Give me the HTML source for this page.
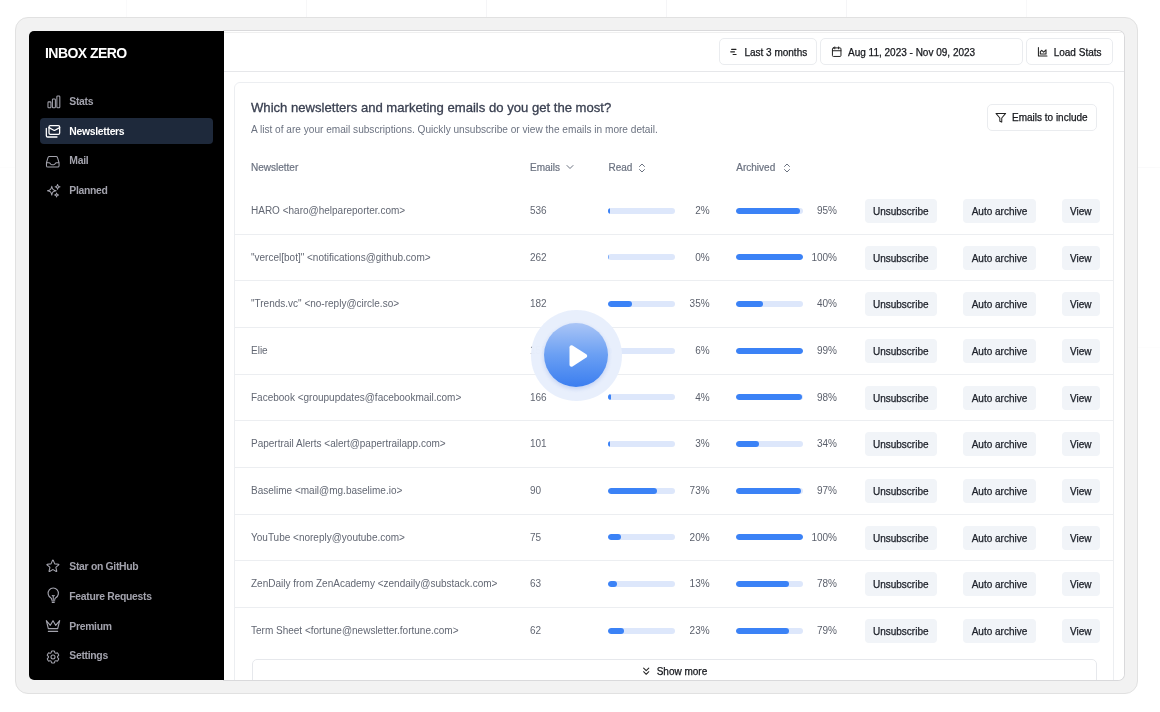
<!DOCTYPE html>
<html><head><meta charset="utf-8">
<style>
*{box-sizing:border-box;margin:0;padding:0}
html,body{width:1160px;height:712px;overflow:hidden;background:#fff;font-family:"Liberation Sans",sans-serif;}
#inner{will-change:transform}
.abs{position:absolute}
.t{position:absolute;white-space:nowrap;line-height:14px;height:14px}
.gv{position:absolute;top:0;width:1px;height:712px;background:#f5f5f7}
.gh{position:absolute;left:0;height:1px;width:1160px;background:#f5f5f7}
#outer{position:absolute;left:15px;top:17px;width:1123px;height:677px;background:#f2f2f2;border:1px solid #e1e1e1;border-radius:13px}
#inner{position:absolute;left:29px;top:31px;width:1095px;height:649px;border-radius:5px 6px 6px 5px;overflow:hidden;background:#fff}
#mborder{position:absolute;left:223px;top:30px;width:902px;height:651px;border:1px solid #d9d9db;border-left:none;border-radius:0 7px 7px 0;background:#fff}
#side{position:absolute;left:0;top:0;width:195px;height:649px;background:#000}
.nav{position:absolute;left:40.3px;height:14px;line-height:14px;font-size:10.4px;font-weight:700;letter-spacing:-0.3px;color:#a3a3ad;white-space:nowrap}
.navi{position:absolute;color:#a3a3ad}
.hbtn{position:absolute;top:38px;height:27px;border:1px solid #eaecef;border-radius:5px;background:#fff}
.btxt{position:absolute;margin-top:0.9px;font-size:10px;color:#16181d;line-height:14px;white-space:nowrap;-webkit-text-stroke:0.25px #16181d}
.row{position:absolute;left:234px;width:880px;height:1px;background:#eceef1}
.cell{position:absolute;font-size:10px;color:#626773;line-height:14px;height:14px;white-space:nowrap}
.bar{position:absolute;height:6px;border-radius:3px;background:#dde7fb;overflow:hidden}
.fill{position:absolute;left:0;top:0;height:100%;border-radius:3px;background:#3b82f6}
.pct{position:absolute;font-size:10px;color:#5a5f6b;line-height:14px;height:14px;text-align:right;white-space:nowrap}
.gbtn{position:absolute;height:24px;border-radius:4px;background:#f1f4f8;font-size:10px;color:#1b1f28;line-height:25.4px;text-align:center;white-space:nowrap;-webkit-text-stroke:0.25px #1b1f28}
.th{position:absolute;top:160.7px;font-size:10px;color:#6b7280;line-height:14px;white-space:nowrap;-webkit-text-stroke:0.2px #6b7280}
</style></head><body>

<div class="abs" style="left:0;top:0;width:1160px;height:712px;-webkit-mask-image:radial-gradient(ellipse 760px 520px at 640px 60px,#000 35%,transparent 100%);mask-image:radial-gradient(ellipse 760px 520px at 640px 60px,#000 35%,transparent 100%)">
<div class="gv" style="left:126px"></div>
<div class="gv" style="left:306px"></div>
<div class="gv" style="left:486px"></div>
<div class="gv" style="left:666px"></div>
<div class="gv" style="left:846px"></div>
<div class="gv" style="left:1026px"></div>
<div class="gh" style="top:167px"></div>
<div class="gh" style="top:347px"></div>
<div class="gh" style="top:527px"></div>
</div>
<div id="outer"></div>
<div id="mborder"></div>
<div id="inner">
<div id="side">
<div class="abs" style="left:16px;top:11.5px;font-size:14px;font-weight:700;color:#fff;letter-spacing:-0.55px;line-height:20px;white-space:nowrap">INBOX ZERO</div>
<div class="abs" style="left:11px;top:87px;width:173px;height:26px;border-radius:4px;background:#1e293b"></div>
<div class="nav" style="top:64.3px;color:#a3a3ad">Stats</div>
<div class="nav" style="top:94.0px;color:#fff">Newsletters</div>
<div class="nav" style="top:123.3px;color:#a3a3ad">Mail</div>
<div class="nav" style="top:152.8px;color:#a3a3ad">Planned</div>
<div class="nav" style="top:529.3px;color:#a3a3ad">Star on GitHub</div>
<div class="nav" style="top:559.2px;color:#a3a3ad">Feature Requests</div>
<div class="nav" style="top:588.8px;color:#a3a3ad">Premium</div>
<div class="nav" style="top:618.4px;color:#a3a3ad">Settings</div>
<svg style="position:absolute;left:16.5px;top:62.5px" width="15.8" height="15.8" viewBox="0 0 24 24" fill="none" stroke="#a3a3ad" stroke-width="1.6" stroke-linecap="round" stroke-linejoin="round" ><path d="M3 13.125C3 12.504 3.504 12 4.125 12h2.25c.621 0 1.125.504 1.125 1.125v6.75C7.5 20.496 6.996 21 6.375 21h-2.25A1.125 1.125 0 013 19.875v-6.75zM9.75 8.625c0-.621.504-1.125 1.125-1.125h2.25c.621 0 1.125.504 1.125 1.125v11.25c0 .621-.504 1.125-1.125 1.125h-2.25a1.125 1.125 0 01-1.125-1.125V8.625zM16.5 4.125c0-.621.504-1.125 1.125-1.125h2.25C20.496 3 21 3.504 21 4.125v15.75c0 .621-.504 1.125-1.125 1.125h-2.25a1.125 1.125 0 01-1.125-1.125V4.125z"/></svg>
<svg style="position:absolute;left:16.2px;top:91.8px" width="16" height="16" viewBox="0 0 24 24" fill="none" stroke="#fff" stroke-width="1.9" stroke-linecap="round" stroke-linejoin="round" ><rect width="16" height="13" x="6" y="4" rx="2"/><path d="m22 7-7.1 3.78c-.57.3-1.23.3-1.8 0L6 7"/><path d="M2 8v11c0 1.1.9 2 2 2h14"/></svg>
<svg style="position:absolute;left:16.2px;top:122.8px" width="15.5" height="15.5" viewBox="0 0 24 24" fill="none" stroke="#a3a3ad" stroke-width="1.6" stroke-linecap="round" stroke-linejoin="round" ><path d="M2.25 13.5h3.86a2.25 2.25 0 012.012 1.244l.256.512a2.25 2.25 0 002.013 1.244h3.218a2.25 2.25 0 002.013-1.244l.256-.512a2.25 2.25 0 012.013-1.244h3.859m-19.5.338V18a2.25 2.25 0 002.25 2.25h15A2.25 2.25 0 0021.75 18v-4.162c0-.224-.034-.447-.1-.661L19.24 5.338a2.25 2.25 0 00-2.15-1.588H6.911a2.25 2.25 0 00-2.15 1.588L2.35 13.177a2.25 2.25 0 00-.1.661z"/></svg>
<svg style="position:absolute;left:16.5px;top:151.5px" width="15.4" height="15.4" viewBox="0 0 24 24" fill="none" stroke="#a3a3ad" stroke-width="1.6" stroke-linecap="round" stroke-linejoin="round" ><path d="M9.813 15.904L9 18.75l-.813-2.846a4.5 4.5 0 00-3.09-3.09L2.25 12l2.846-.813a4.5 4.5 0 003.09-3.09L9 5.25l.813 2.846a4.5 4.5 0 003.09 3.09L15.75 12l-2.846.813a4.5 4.5 0 00-3.09 3.09zM18.259 8.715L18 9.75l-.259-1.035a3.375 3.375 0 00-2.455-2.456L14.25 6l1.036-.259a3.375 3.375 0 002.455-2.456L18 2.25l.259 1.035a3.375 3.375 0 002.456 2.456L21.75 6l-1.035.259a3.375 3.375 0 00-2.456 2.456zM16.894 20.567L16.5 21.75l-.394-1.183a2.25 2.25 0 00-1.423-1.423L13.5 18.75l1.183-.394a2.25 2.25 0 001.423-1.423l.394-1.183.394 1.183a2.25 2.25 0 001.423 1.423l1.183.394-1.183.394a2.25 2.25 0 00-1.423 1.423z"/></svg>
<svg style="position:absolute;left:16.4px;top:527.2px" width="15.8" height="15.8" viewBox="0 0 24 24" fill="none" stroke="#a3a3ad" stroke-width="1.6" stroke-linecap="round" stroke-linejoin="round" ><path d="M11.48 3.499a.562.562 0 011.04 0l2.125 5.111a.563.563 0 00.475.345l5.518.442c.499.04.701.663.321.988l-4.204 3.602a.563.563 0 00-.182.557l1.285 5.385a.562.562 0 01-.84.61l-4.725-2.885a.563.563 0 00-.586 0L6.982 20.54a.562.562 0 01-.84-.61l1.285-5.386a.562.562 0 00-.182-.557l-4.204-3.602a.563.563 0 01.321-.988l5.518-.442a.563.563 0 00.475-.345L11.48 3.5z"/></svg>
<svg style="position:absolute;left:15.8px;top:556.2px" width="16.5" height="16.5" viewBox="0 0 24 24" fill="none" stroke="#a3a3ad" stroke-width="1.6" stroke-linecap="round" stroke-linejoin="round" ><path d="M12 18v-5.25m0 0a6.01 6.01 0 001.5-.189m-1.5.189a6.01 6.01 0 01-1.5-.189m3.75 7.478a12.06 12.06 0 01-4.5 0m3.75 2.383a14.406 14.406 0 01-3 0M14.25 18v-.192c0-.983.658-1.823 1.508-2.316a7.5 7.5 0 10-7.517 0c.85.493 1.509 1.333 1.509 2.316V18"/></svg>
<svg style="position:absolute;left:16.2px;top:586.9px" width="16" height="16" viewBox="0 0 24 24" fill="none" stroke="#a3a3ad" stroke-width="1.7" stroke-linecap="round" stroke-linejoin="round" ><path d="m2 4 3 12h14l3-12-6 7-4-7-4 7-6-7zm3 16h14"/></svg>
<svg style="position:absolute;left:15.9px;top:617.6px" width="16" height="16" viewBox="0 0 24 24" fill="none" stroke="#a3a3ad" stroke-width="1.6" stroke-linecap="round" stroke-linejoin="round" ><path d="M9.594 3.94c.09-.542.56-.94 1.11-.94h2.593c.55 0 1.02.398 1.11.94l.213 1.281c.063.374.313.686.645.87.074.04.147.083.22.127.324.196.72.257 1.075.124l1.217-.456a1.125 1.125 0 011.37.49l1.296 2.247a1.125 1.125 0 01-.26 1.431l-1.003.827c-.293.24-.438.613-.431.992a6.759 6.759 0 010 .255c-.007.378.138.75.43.99l1.005.828c.424.35.534.954.26 1.43l-1.298 2.247a1.125 1.125 0 01-1.369.491l-1.217-.456c-.355-.133-.75-.072-1.076.124a6.57 6.57 0 01-.22.128c-.331.183-.581.495-.644.869l-.213 1.28c-.09.543-.56.941-1.11.941h-2.594c-.55 0-1.02-.398-1.11-.94l-.213-1.281c-.062-.374-.312-.686-.644-.87a6.52 6.52 0 01-.22-.127c-.325-.196-.72-.257-1.076-.124l-1.217.456a1.125 1.125 0 01-1.369-.49l-1.297-2.247a1.125 1.125 0 01.26-1.431l1.004-.827c.292-.24.437-.613.43-.992a6.932 6.932 0 010-.255c.007-.378-.138-.75-.43-.99l-1.004-.828a1.125 1.125 0 01-.26-1.43l1.297-2.247a1.125 1.125 0 011.37-.491l1.216.456c.356.133.751.072 1.076-.124.072-.044.146-.087.22-.128.332-.183.582-.495.644-.869l.214-1.281z"/><path d="M15 12a3 3 0 11-6 0 3 3 0 016 0z"/></svg>
</div>
<div class="abs" style="left:195px;top:1px;width:900px;height:1px;background:#efefef"></div>
<div class="abs" style="left:195px;top:40px;width:910px;height:1px;background:#e6e7ea"></div>
<div class="hbtn" style="left:690.4px;top:7px;width:98.0px"></div><svg style="position:absolute;left:695px;top:9px" width="24" height="24" viewBox="0 0 24 24" fill="none" stroke="#222" stroke-width="1.15" stroke-linecap="round" stroke-linejoin="round" ><path d="M7.6 9.3H12M6.7 11.8H10.5M9.1 14.5H12.1"/></svg><div class="btxt" style="left:715.4px;top:13.8px">Last 3 months</div>
<div class="hbtn" style="left:791.4px;top:7px;width:202.6px"></div><svg style="position:absolute;left:802.2px;top:15.2px" width="11.4" height="11.4" viewBox="0 0 24 24" fill="none" stroke="#222" stroke-width="2.1" stroke-linecap="round" stroke-linejoin="round" ><rect width="18" height="18" x="3" y="4" rx="2" ry="2"/><line x1="16" x2="16" y1="2" y2="6"/><line x1="8" x2="8" y1="2" y2="6"/><line x1="3" x2="21" y1="10" y2="10"/></svg><div class="btxt" style="left:819px;top:13.8px">Aug 11, 2023 - Nov 09, 2023</div>
<div class="hbtn" style="left:997px;top:7px;width:86.6px"></div><svg style="position:absolute;left:1008px;top:14.9px" width="11.4" height="11.4" viewBox="0 0 24 24" fill="none" stroke="#222" stroke-width="2.2" stroke-linecap="round" stroke-linejoin="round" ><path d="M3 3v18h18"/><path d="M7 12v5h12V8l-5 5-4-4Z"/></svg><div class="btxt" style="left:1024.7px;top:13.8px">Load Stats</div>
<div class="abs" style="left:205px;top:51px;width:880px;height:700px;border:1px solid #eceef1;border-radius:6px;background:#fff"></div>
<div class="abs" style="left:222px;top:67.5px;font-size:13.1px;font-weight:400;color:#3a4051;-webkit-text-stroke:0.3px #3a4051;line-height:18px;white-space:nowrap">Which newsletters and marketing emails do you get the most?</div>
<div class="abs" style="left:222px;top:92.3px;font-size:10.1px;color:#6b7280;line-height:14px;white-space:nowrap">A list of are your email subscriptions. Quickly unsubscribe or view the emails in more detail.</div>
<div class="hbtn" style="left:958.2px;top:73.2px;width:109.4px;height:26.5px"></div>
<svg style="position:absolute;left:966.4px;top:80.6px" width="11.6" height="11.6" viewBox="0 0 24 24" fill="none" stroke="#222" stroke-width="2.1" stroke-linecap="round" stroke-linejoin="round" ><polygon points="22 3 2 3 10 12.46 10 19 14 21 14 12.46 22 3"/></svg>
<div class="btxt" style="left:983px;top:79.5px">Emails to include</div>
<div class="th" style="left:222px;top:130.4px">Newsletter</div>
<div class="th" style="left:501px;top:130.4px">Emails</div>
<div class="th" style="left:579.5px;top:130.4px">Read</div>
<div class="th" style="left:707.3px;top:130.4px">Archived</div>
<svg style="position:absolute;left:535.1px;top:130.1px" width="12" height="12" viewBox="0 0 24 24" fill="none" stroke="#6b7280" stroke-width="2" stroke-linecap="round" stroke-linejoin="round" ><path d="m6 9 6 6 6-6"/></svg>
<svg style="position:absolute;left:607px;top:130.7px" width="12" height="12" viewBox="0 0 24 24" fill="none" stroke="#6b7280" stroke-width="2" stroke-linecap="round" stroke-linejoin="round" ><path d="m7 15 5 5 5-5"/><path d="m7 9 5-5 5 5"/></svg>
<svg style="position:absolute;left:752.1px;top:130.7px" width="12" height="12" viewBox="0 0 24 24" fill="none" stroke="#6b7280" stroke-width="2" stroke-linecap="round" stroke-linejoin="round" ><path d="m7 15 5 5 5-5"/><path d="m7 9 5-5 5 5"/></svg>
<div class="cell" style="left:222px;top:173.10px">HARO &lt;haro@helpareporter.com&gt;</div>
<div class="cell" style="left:501px;top:173.10px">536</div>
<div class="bar" style="left:579px;top:176.80px;width:67.4px"><div class="fill" style="width:2.20px"></div></div>
<div class="pct" style="left:641px;top:173.10px;width:39.6px">2%</div>
<div class="bar" style="left:707px;top:176.80px;width:67.4px"><div class="fill" style="width:64.03px"></div></div>
<div class="pct" style="left:768px;top:173.10px;width:40px">95%</div>
<div class="gbtn" style="left:835.5px;top:167.90px;width:72.5px">Unsubscribe</div>
<div class="gbtn" style="left:934px;top:167.90px;width:73px">Auto archive</div>
<div class="gbtn" style="left:1032.7px;top:167.90px;width:38.2px">View</div>
<div class="row" style="left:205.5px;top:202.63px;width:879px"></div>
<div class="cell" style="left:222px;top:219.77px">"vercel[bot]" &lt;notifications@github.com&gt;</div>
<div class="cell" style="left:501px;top:219.77px">262</div>
<div class="bar" style="left:579px;top:223.47px;width:67.4px"><div class="fill" style="width:1px;opacity:.6"></div></div>
<div class="pct" style="left:641px;top:219.77px;width:39.6px">0%</div>
<div class="bar" style="left:707px;top:223.47px;width:67.4px"><div class="fill" style="width:67.40px"></div></div>
<div class="pct" style="left:768px;top:219.77px;width:40px">100%</div>
<div class="gbtn" style="left:835.5px;top:214.57px;width:72.5px">Unsubscribe</div>
<div class="gbtn" style="left:934px;top:214.57px;width:73px">Auto archive</div>
<div class="gbtn" style="left:1032.7px;top:214.57px;width:38.2px">View</div>
<div class="row" style="left:205.5px;top:249.31px;width:879px"></div>
<div class="cell" style="left:222px;top:266.44px">"Trends.vc" &lt;no-reply@circle.so&gt;</div>
<div class="cell" style="left:501px;top:266.44px">182</div>
<div class="bar" style="left:579px;top:270.14px;width:67.4px"><div class="fill" style="width:23.59px"></div></div>
<div class="pct" style="left:641px;top:266.44px;width:39.6px">35%</div>
<div class="bar" style="left:707px;top:270.14px;width:67.4px"><div class="fill" style="width:26.96px"></div></div>
<div class="pct" style="left:768px;top:266.44px;width:40px">40%</div>
<div class="gbtn" style="left:835.5px;top:261.24px;width:72.5px">Unsubscribe</div>
<div class="gbtn" style="left:934px;top:261.24px;width:73px">Auto archive</div>
<div class="gbtn" style="left:1032.7px;top:261.24px;width:38.2px">View</div>
<div class="row" style="left:205.5px;top:295.98px;width:879px"></div>
<div class="cell" style="left:222px;top:313.11px">Elie</div>
<div class="cell" style="left:501px;top:313.11px">152</div>
<div class="bar" style="left:579px;top:316.81px;width:67.4px"><div class="fill" style="width:4.04px"></div></div>
<div class="pct" style="left:641px;top:313.11px;width:39.6px">6%</div>
<div class="bar" style="left:707px;top:316.81px;width:67.4px"><div class="fill" style="width:66.73px"></div></div>
<div class="pct" style="left:768px;top:313.11px;width:40px">99%</div>
<div class="gbtn" style="left:835.5px;top:307.91px;width:72.5px">Unsubscribe</div>
<div class="gbtn" style="left:934px;top:307.91px;width:73px">Auto archive</div>
<div class="gbtn" style="left:1032.7px;top:307.91px;width:38.2px">View</div>
<div class="row" style="left:205.5px;top:342.64px;width:879px"></div>
<div class="cell" style="left:222px;top:359.78px">Facebook &lt;groupupdates@facebookmail.com&gt;</div>
<div class="cell" style="left:501px;top:359.78px">166</div>
<div class="bar" style="left:579px;top:363.48px;width:67.4px"><div class="fill" style="width:2.70px"></div></div>
<div class="pct" style="left:641px;top:359.78px;width:39.6px">4%</div>
<div class="bar" style="left:707px;top:363.48px;width:67.4px"><div class="fill" style="width:66.05px"></div></div>
<div class="pct" style="left:768px;top:359.78px;width:40px">98%</div>
<div class="gbtn" style="left:835.5px;top:354.58px;width:72.5px">Unsubscribe</div>
<div class="gbtn" style="left:934px;top:354.58px;width:73px">Auto archive</div>
<div class="gbtn" style="left:1032.7px;top:354.58px;width:38.2px">View</div>
<div class="row" style="left:205.5px;top:389.32px;width:879px"></div>
<div class="cell" style="left:222px;top:406.45px">Papertrail Alerts &lt;alert@papertrailapp.com&gt;</div>
<div class="cell" style="left:501px;top:406.45px">101</div>
<div class="bar" style="left:579px;top:410.15px;width:67.4px"><div class="fill" style="width:2.20px"></div></div>
<div class="pct" style="left:641px;top:406.45px;width:39.6px">3%</div>
<div class="bar" style="left:707px;top:410.15px;width:67.4px"><div class="fill" style="width:22.92px"></div></div>
<div class="pct" style="left:768px;top:406.45px;width:40px">34%</div>
<div class="gbtn" style="left:835.5px;top:401.25px;width:72.5px">Unsubscribe</div>
<div class="gbtn" style="left:934px;top:401.25px;width:73px">Auto archive</div>
<div class="gbtn" style="left:1032.7px;top:401.25px;width:38.2px">View</div>
<div class="row" style="left:205.5px;top:435.99px;width:879px"></div>
<div class="cell" style="left:222px;top:453.12px">Baselime &lt;mail@mg.baselime.io&gt;</div>
<div class="cell" style="left:501px;top:453.12px">90</div>
<div class="bar" style="left:579px;top:456.82px;width:67.4px"><div class="fill" style="width:49.20px"></div></div>
<div class="pct" style="left:641px;top:453.12px;width:39.6px">73%</div>
<div class="bar" style="left:707px;top:456.82px;width:67.4px"><div class="fill" style="width:65.38px"></div></div>
<div class="pct" style="left:768px;top:453.12px;width:40px">97%</div>
<div class="gbtn" style="left:835.5px;top:447.92px;width:72.5px">Unsubscribe</div>
<div class="gbtn" style="left:934px;top:447.92px;width:73px">Auto archive</div>
<div class="gbtn" style="left:1032.7px;top:447.92px;width:38.2px">View</div>
<div class="row" style="left:205.5px;top:482.65px;width:879px"></div>
<div class="cell" style="left:222px;top:499.79px">YouTube &lt;noreply@youtube.com&gt;</div>
<div class="cell" style="left:501px;top:499.79px">75</div>
<div class="bar" style="left:579px;top:503.49px;width:67.4px"><div class="fill" style="width:13.48px"></div></div>
<div class="pct" style="left:641px;top:499.79px;width:39.6px">20%</div>
<div class="bar" style="left:707px;top:503.49px;width:67.4px"><div class="fill" style="width:67.40px"></div></div>
<div class="pct" style="left:768px;top:499.79px;width:40px">100%</div>
<div class="gbtn" style="left:835.5px;top:494.59px;width:72.5px">Unsubscribe</div>
<div class="gbtn" style="left:934px;top:494.59px;width:73px">Auto archive</div>
<div class="gbtn" style="left:1032.7px;top:494.59px;width:38.2px">View</div>
<div class="row" style="left:205.5px;top:529.33px;width:879px"></div>
<div class="cell" style="left:222px;top:546.46px">ZenDaily from ZenAcademy &lt;zendaily@substack.com&gt;</div>
<div class="cell" style="left:501px;top:546.46px">63</div>
<div class="bar" style="left:579px;top:550.16px;width:67.4px"><div class="fill" style="width:8.76px"></div></div>
<div class="pct" style="left:641px;top:546.46px;width:39.6px">13%</div>
<div class="bar" style="left:707px;top:550.16px;width:67.4px"><div class="fill" style="width:52.57px"></div></div>
<div class="pct" style="left:768px;top:546.46px;width:40px">78%</div>
<div class="gbtn" style="left:835.5px;top:541.26px;width:72.5px">Unsubscribe</div>
<div class="gbtn" style="left:934px;top:541.26px;width:73px">Auto archive</div>
<div class="gbtn" style="left:1032.7px;top:541.26px;width:38.2px">View</div>
<div class="row" style="left:205.5px;top:576.00px;width:879px"></div>
<div class="cell" style="left:222px;top:593.13px">Term Sheet &lt;fortune@newsletter.fortune.com&gt;</div>
<div class="cell" style="left:501px;top:593.13px">62</div>
<div class="bar" style="left:579px;top:596.83px;width:67.4px"><div class="fill" style="width:15.50px"></div></div>
<div class="pct" style="left:641px;top:593.13px;width:39.6px">23%</div>
<div class="bar" style="left:707px;top:596.83px;width:67.4px"><div class="fill" style="width:53.25px"></div></div>
<div class="pct" style="left:768px;top:593.13px;width:40px">79%</div>
<div class="gbtn" style="left:835.5px;top:587.93px;width:72.5px">Unsubscribe</div>
<div class="gbtn" style="left:934px;top:587.93px;width:73px">Auto archive</div>
<div class="gbtn" style="left:1032.7px;top:587.93px;width:38.2px">View</div>
<div class="abs" style="left:222.5px;top:628.2px;width:845.3px;height:60px;border:1px solid #e6e8ec;border-radius:5px;background:#fff"></div>
<svg style="position:absolute;left:610.6px;top:633.6px" width="12.4" height="12.4" viewBox="0 0 24 24" fill="none" stroke="#222" stroke-width="2" stroke-linecap="round" stroke-linejoin="round" ><path d="m7 6 5 5 5-5"/><path d="m7 13 5 5 5-5"/></svg>
<div class="btxt" style="left:627.7px;top:633px">Show more</div>
<div class="abs" style="left:502px;top:279.2px;width:90.6px;height:90.6px;border-radius:50%;background:rgba(232,239,252,0.985)"></div>
<div class="abs" style="left:514.9px;top:292px;width:64.2px;height:64.2px;border-radius:50%;background:linear-gradient(180deg,#aac5f6 0%,#6a9ff3 50%,#3b7ef0 100%);box-shadow:0 2px 4px rgba(30,80,200,0.18)"></div>
<svg class="abs" style="left:537px;top:312.5px" width="24" height="24" viewBox="0 0 24 24"><path d="M3.5 3.2 C3.5 1.6 5.2 0.7 6.5 1.5 L20.3 10.2 C21.5 11 21.5 12.8 20.3 13.6 L6.5 22.4 C5.2 23.2 3.5 22.3 3.5 20.7 Z" fill="#fff"/></svg>
</div>
</body></html>
